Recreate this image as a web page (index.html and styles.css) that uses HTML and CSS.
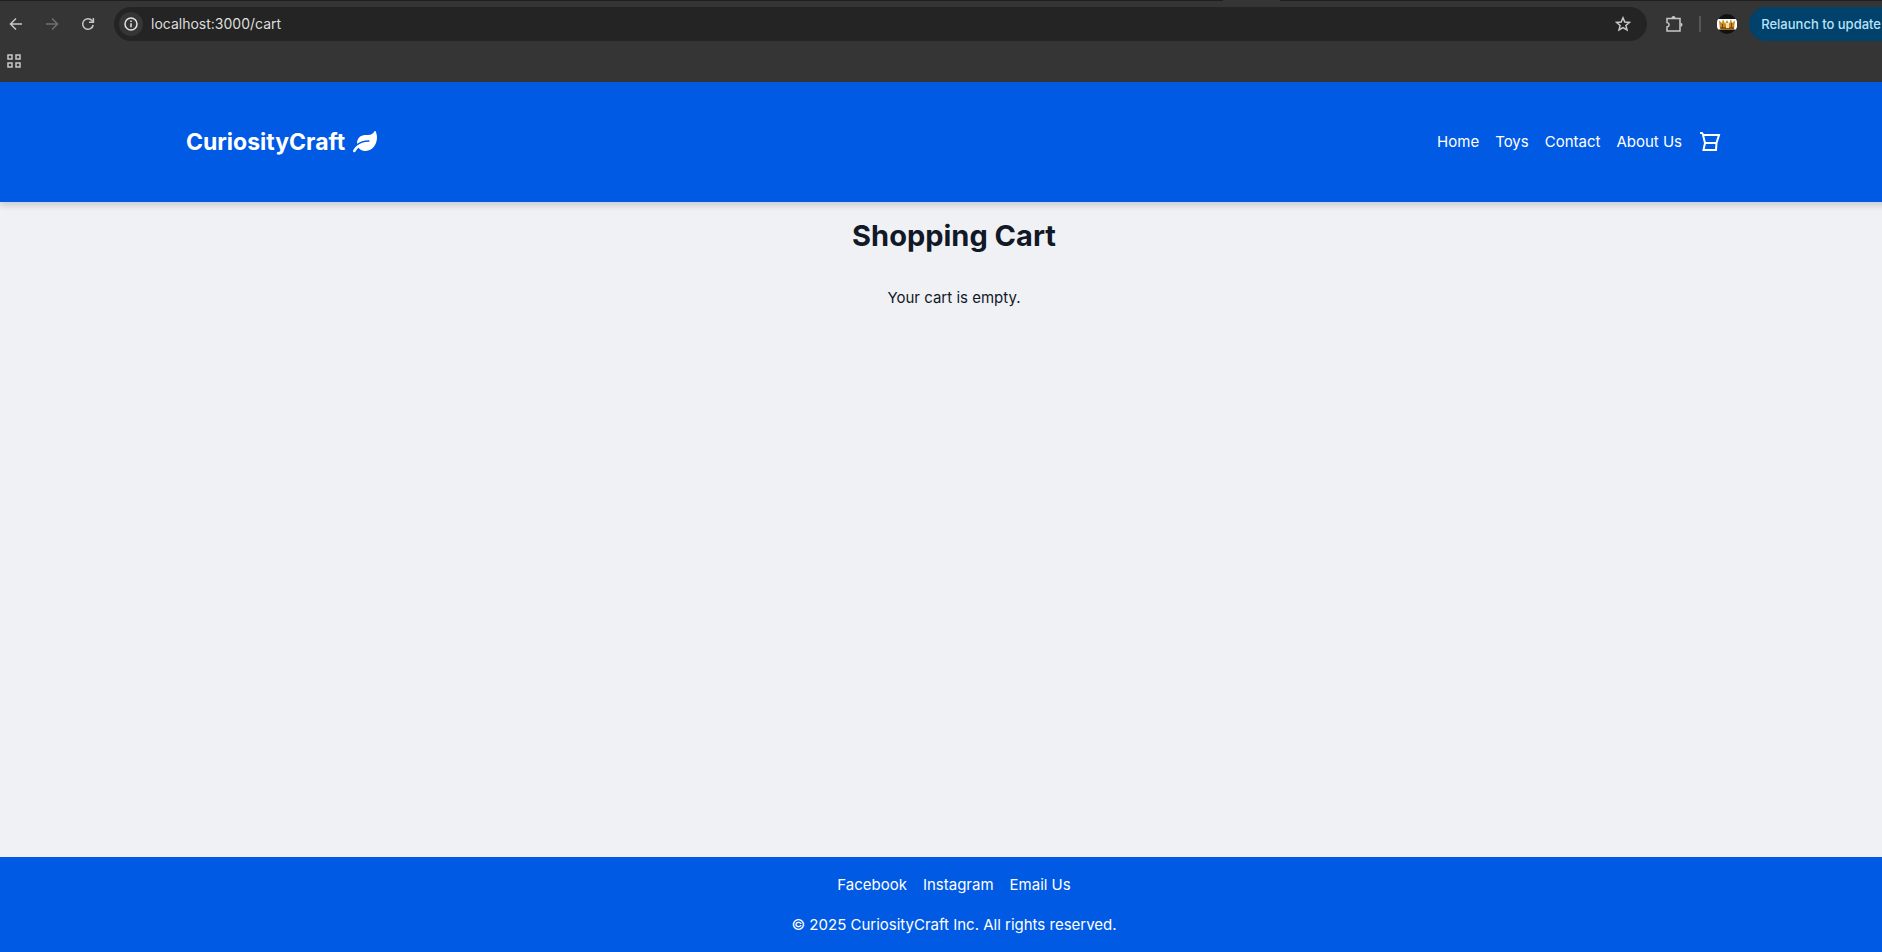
FILE: index.html
```html
<!DOCTYPE html>
<html lang="en">
<head>
<meta charset="utf-8">
<title>CuriosityCraft - Shopping Cart</title>
<link rel="stylesheet" href="styles.css">
</head>
<body>
<div class="browser">
  <div class="tab-edge"></div>
  <div class="toolbar">
    <div class="nav-buttons">
      <button class="tool" aria-label="Back"><svg viewBox="0 0 16 16"><path d="M14 8H3M8 2.500 2.500 8 8 13.500"/></svg></button>
      <button class="tool tool-off" aria-label="Forward"><svg viewBox="0 0 16 16"><path d="M2 8h11M8 2.500 13.500 8 8 13.500"/></svg></button>
      <button class="tool" aria-label="Reload"><svg viewBox="0 0 16 16"><path d="M13.200 9A5.300 5.300 0 1 1 12 4.500l1 1.200"/><path d="M13.400 2v4.300H9"/></svg></button>
    </div>
    <div class="address">
      <button class="site-info" aria-label="Site information"><svg viewBox="0 0 16 16"><circle cx="8" cy="8" r="6"/><path d="M8 7.300v4M8 4.500v1.500"/></svg></button>
      <input class="url" type="text" aria-label="Address" value="localhost:3000/cart">
      <button class="tool" aria-label="Bookmark"><svg viewBox="0 0 16 16"><path d="M8 1.800 9.800 6l4.600.400-3.500 3 1.100 4.500L8 11.500 4 13.900l1.100-4.500-3.500-3L6.200 6z"/></svg></button>
    </div>
    <button class="tool extensions" aria-label="Extensions"><svg viewBox="0 0 18 18"><path d="M2 3.500h13v12.500h-13v-4c2.800-.500 2.800-4 0-4.500z"/><path class="solid" d="M6.500 3a2 2 0 0 1 4 0zM15.500 7.700a2 2 0 0 1 0 4z"/></svg></button>
    <span class="divider"></span>
    <button class="profile" aria-label="Profile"><svg viewBox="0 0 20 20">
      <circle cx="10" cy="10" r="10" fill="#111"/>
      <path d="M1.200 5h17.600a10 10 0 0 1 0 10.500H1.200A10 10 0 0 1 1.200 5z" fill="#fff"/>
      <path d="M2 6.500 5 9l1-4 2 5 2-4 2 4 2-5 1 4 3-2.500-1 9H3z" fill="#c88a25"/>
      <path d="M3 13h14v2.500H4z" fill="#8d5511"/>
      <path d="M9 9h3v5H9z" fill="#ffe795"/>
      <path d="M5 10h1v4H5zM14 9h1v4h-1z" fill="#79430d"/>
    </svg></button>
    <button class="relaunch">Relaunch to update</button>
  </div>
  <div class="bookmarks">
    <button class="apps" aria-label="Apps"><svg viewBox="0 0 14 14"><path d="M1 1h4v4H1zM9 1h4v4H9zM1 9h4v4H1zM9 9h4v4H9z"/></svg></button>
  </div>
</div>
<div class="page">
  <header class="site-header">
    <div class="container">
      <a class="brand" href="#">CuriosityCraft
        <svg viewBox="0 0 576 512"><path d="M546.200 9.700c-5.600-12.500-21.600-13-28.300-1.200C486.900 62.400 431.400 96 368 96h-80C182 96 96 182 96 288c0 7 .8 13.700 1.500 20.500C161.300 262.800 253.400 224 384 224c8.800 0 16 7.200 16 16s-7.200 16-16 16C132.600 256 26 410.100 2.400 468c-6.600 16.300 1.200 34.900 17.500 41.600 16.400 6.800 35-1.100 41.800-17.300 1.500-3.600 20.900-47.900 71.900-90.600 32.400 43.900 94 85.800 174.900 77.200C465.500 467.500 576 326.700 576 154.300c0-50.200-10.800-102.200-29.800-144.600z"/></svg>
      </a>
      <nav class="menu">
        <a href="#">Home</a>
        <a href="#">Toys</a>
        <a href="#">Contact</a>
        <a href="#">About Us</a>
        <a class="cart" href="#" aria-label="Cart"><svg viewBox="0 0 24 24"><path d="M2 3h2l1.500 2H21l-2.500 8-.500 7H5.500L7 13 5 5M7 13h11.500"/></svg></a>
      </nav>
    </div>
  </header>
  <main class="content">
    <h1>Shopping Cart</h1>
    <p>Your cart is empty.</p>
  </main>
  <footer class="site-footer">
    <nav class="social">
      <a href="#">Facebook</a>
      <a href="#">Instagram</a>
      <a href="#">Email Us</a>
    </nav>
    <p>© 2025 CuriosityCraft Inc. All rights reserved.</p>
  </footer>
</div>
</body>
</html>
```
FILE: styles.css
```css
* { box-sizing: border-box; }
body {
  margin: 0;
  min-height: 100vh;
  display: flex;
  flex-direction: column;
  overflow: hidden;
  background: #f0f1f4;
  color: #111827;
  font-family: Inter, "Liberation Sans", sans-serif;
  font-size: 15px;
  line-height: 24px;
}
h1, p { margin: 0; }
a { color: inherit; text-decoration: none; }
button {
  border: 0;
  padding: 0;
  background: none;
  color: inherit;
  font: inherit;
  flex-shrink: 0;
}
svg { display: block; }

.browser {
  background: #353535;
  color: #c7c7c7;
  height: 82px;
  flex-shrink: 0;
}
.browser svg {
  width: 100%;
  height: 100%;
  fill: none;
  stroke: currentColor;
  stroke-width: 1.5;
}
.tab-edge {
  height: 1px;
  background: linear-gradient(90deg, #1f1f1f 65%, #353535 65%, #353535 68%, #1f1f1f 68%);
}
.toolbar {
  display: flex;
  align-items: center;
  height: 46px;
  padding-left: 8px;
}
.nav-buttons { display: flex; gap: 20px; margin-right: 18px; }
.tool { width: 16px; height: 16px; }
.tool-off { color: #6f6f6f; }
.address {
  flex: 1;
  display: flex;
  align-items: center;
  height: 34px;
  padding: 0 16px 0 5px;
  border-radius: 17px;
  background: #242424;
}
.site-info {
  width: 24px;
  height: 24px;
  padding: 4px;
  border-radius: 12px;
  background: #353535;
  color: #e3e3e3;
}
.url {
  flex: 1;
  margin-left: 8px;
  padding: 0;
  border: 0;
  outline: 0;
  background: none;
  color: #dedede;
  font: 14px/20px Inter, "Liberation Sans", sans-serif;
}
.extensions { width: 18px; height: 18px; margin-left: 18px; }
.browser .solid { fill: currentColor; stroke: none; }
.divider { width: 2px; height: 16px; margin: 0 16px; background: #565656; }
.profile { width: 20px; height: 20px; }
.profile svg { stroke: none; }
.relaunch {
  height: 34px;
  margin-left: 12px;
  padding: 0 1px 0 12px;
  border-radius: 17px 0 0 17px;
  background: #00426b;
  color: #b9e1fb;
  font-size: 13px;
  font-weight: 500;
}
.bookmarks { padding: 7px; }
.apps { display: block; width: 14px; height: 14px; }

/* The page is wider than the window by its hidden right gutter. */
.page {
  flex: 1;
  display: flex;
  flex-direction: column;
  width: calc(100% + 26px);
}
.site-header {
  padding: 40px 0;
  background: #005ae4;
  color: #fff;
  box-shadow: 0 4px 6px rgba(0, 0, 0, 0.14);
}
.container {
  display: flex;
  align-items: center;
  justify-content: space-between;
  max-width: 1536px;
  height: 40px;
  margin: 0 auto;
}
.brand {
  display: flex;
  align-items: center;
  gap: 8px;
  font-size: 23px;
  font-weight: 700;
}
.brand svg { width: 24px; fill: currentColor; }
.menu { display: flex; align-items: center; gap: 16px; }
.cart svg {
  width: 24px;
  height: 24px;
  fill: none;
  stroke: currentColor;
  stroke-width: 2;
}
.content { flex: 1; padding: 16px; text-align: center; }
h1 { margin-bottom: 32px; font-size: 29px; line-height: 36px; font-weight: 700; }
.site-footer {
  padding: 16px 16px 15px;
  background: #005ae4;
  color: #fff;
  text-align: center;
}
.social { display: flex; justify-content: center; gap: 16px; margin-bottom: 16px; }
```
